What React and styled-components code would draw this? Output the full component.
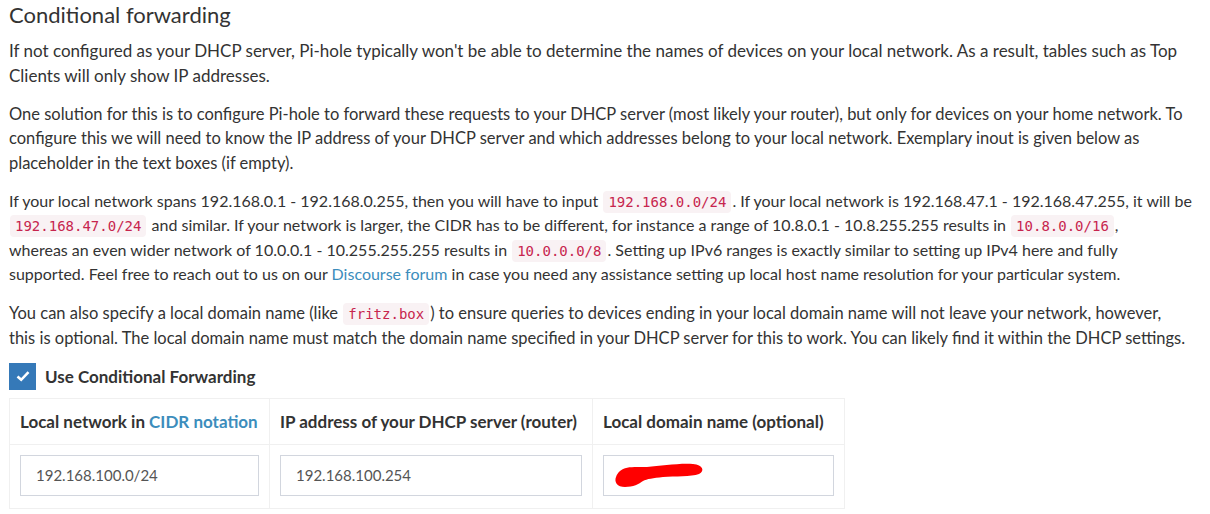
import React from "react";
import styled, { createGlobalStyle } from "styled-components";

const Global = createGlobalStyle`
  html, body { margin: 0; padding: 0; background: #fff; }
  body { font-family: "Lato", "Noto Sans", sans-serif; color: #333; }
`;

const Page = styled.div`
  padding: 0 9px;
  display: flex;
  flex-direction: column;
  align-items: flex-start;
`;

const Title = styled.h3`
  margin: 2px 0 11px;
  font-size: 22px;
  font-weight: 400;
  line-height: 26px;
  color: #333;
`;

const Para = styled.p`
  margin: 0 0 ${(p) => p.$gap || 13.5}px;
  font-size: ${(p) => p.$size || 17}px;
  line-height: 24.5px;
  white-space: nowrap;
`;

const Code = styled.code`
  font-family: "DejaVu Sans Mono", "Liberation Mono", monospace;
  font-size: 14px;
  line-height: 16px;
  padding: 3px 5px;
  margin: 0 1px;
  color: #c7254e;
  background: #f9f2f4;
  border-radius: 4px;
`;

const Link = styled.a`
  color: #3c8dbc;
  text-decoration: none;
`;

const CheckRow = styled.label`
  display: flex;
  align-items: center;
  gap: 9px;
  margin-top: -1px;
  font-size: 17px;
  font-weight: 700;
  height: 27px;
`;

const Box = styled.span`
  width: 27px;
  height: 27px;
  background: #3579b8;
  display: flex;
  align-items: center;
  justify-content: center;
`;

const Table = styled.div`
  margin-top: 8px;
  display: grid;
  grid-template-columns: 259px 323px 252px;
  border: 1px solid #f0f0f0;
`;

const HeadCell = styled.div`
  height: 45px;
  display: flex;
  align-items: center;
  padding: 0 10px;
  font-size: 17px;
  font-weight: 700;
  border-bottom: 1px solid #f0f0f0;
  border-left: ${(p) => (p.$first ? "none" : "1px solid #f0f0f0")};
  white-space: nowrap;
`;

const Cell = styled.div`
  padding: 10px 10px 12px;
  border-left: ${(p) => (p.$first ? "none" : "1px solid #f0f0f0")};
`;

const Input = styled.div`
  box-sizing: border-box;
  height: 41px;
  border: 1px solid #d2d6de;
  display: flex;
  align-items: center;
  padding: 0 15px;
  font-size: 15px;
  color: #555;
  position: relative;
`;

const Scribble = styled.svg`
  position: absolute;
  left: 9px;
  top: 6px;
`;

export default function App() {
  return (
    <>
      <Global />
      <Page>
        <Title>Conditional forwarding</Title>
        <Para>
          If not configured as your DHCP server, Pi-hole typically won't be able to determine the names of devices on your local network. As a result, tables such as Top
          <br />
          Clients will only show IP addresses.
        </Para>
        <Para $size={16.5}>
          One solution for this is to configure Pi-hole to forward these requests to your DHCP server (most likely your router), but only for devices on your home network. To
          <br />
          configure this we will need to know the IP address of your DHCP server and which addresses belong to your local network. Exemplary inout is given below as
          <br />
          placeholder in the text boxes (if empty).
        </Para>
        <Para $size={16} $gap={14.5}>
          If your local network spans 192.168.0.1 - 192.168.0.255, then you will have to input <Code>192.168.0.0/24</Code>. If your local network is 192.168.47.1 - 192.168.47.255, it will be
          <br />
          <Code>192.168.47.0/24</Code> and similar. If your network is larger, the CIDR has to be different, for instance a range of 10.8.0.1 - 10.8.255.255 results in <Code>10.8.0.0/16</Code>,
          <br />
          whereas an even wider network of 10.0.0.1 - 10.255.255.255 results in <Code>10.0.0.0/8</Code>. Setting up IPv6 ranges is exactly similar to setting up IPv4 here and fully
          <br />
          supported. Feel free to reach out to us on our <Link href="#">Discourse forum</Link> in case you need any assistance setting up local host name resolution for your particular system.
        </Para>
        <Para $size={16.5}>
          You can also specify a local domain name (like <Code>fritz.box</Code>) to ensure queries to devices ending in your local domain name will not leave your network, however,
          <br />
          this is optional. The local domain name must match the domain name specified in your DHCP server for this to work. You can likely find it within the DHCP settings.
        </Para>
        <CheckRow>
          <Box>
            <svg width="16" height="14" viewBox="0 0 16 14">
              <path d="M2.5 7.5 L6.2 10.8 L13.5 3.2" fill="none" stroke="#fff" strokeWidth="2.6" />
            </svg>
          </Box>
          Use Conditional Forwarding
        </CheckRow>
        <Table>
          <HeadCell $first>
            Local network in&nbsp;<Link href="#">CIDR notation</Link>
          </HeadCell>
          <HeadCell>IP address of your DHCP server (router)</HeadCell>
          <HeadCell>Local domain name (optional)</HeadCell>
          <Cell $first>
            <Input>192.168.100.0/24</Input>
          </Cell>
          <Cell>
            <Input>192.168.100.254</Input>
          </Cell>
          <Cell>
            <Input>
              <Scribble width="92" height="28" viewBox="0 0 92 28">
                <path
                  d="M7 9 C12 4 22 5 34 5 C48 4 66 1 80 2 C90 3 92 9 86 12 C78 15 62 14 50 15 C40 16 34 17 30 19 C26 22 20 25 12 25 C4 25 1 20 3 15 C4 12 5 11 7 9 Z"
                  fill="#ff0000"
                />
              </Scribble>
            </Input>
          </Cell>
        </Table>
      </Page>
    </>
  );
}
